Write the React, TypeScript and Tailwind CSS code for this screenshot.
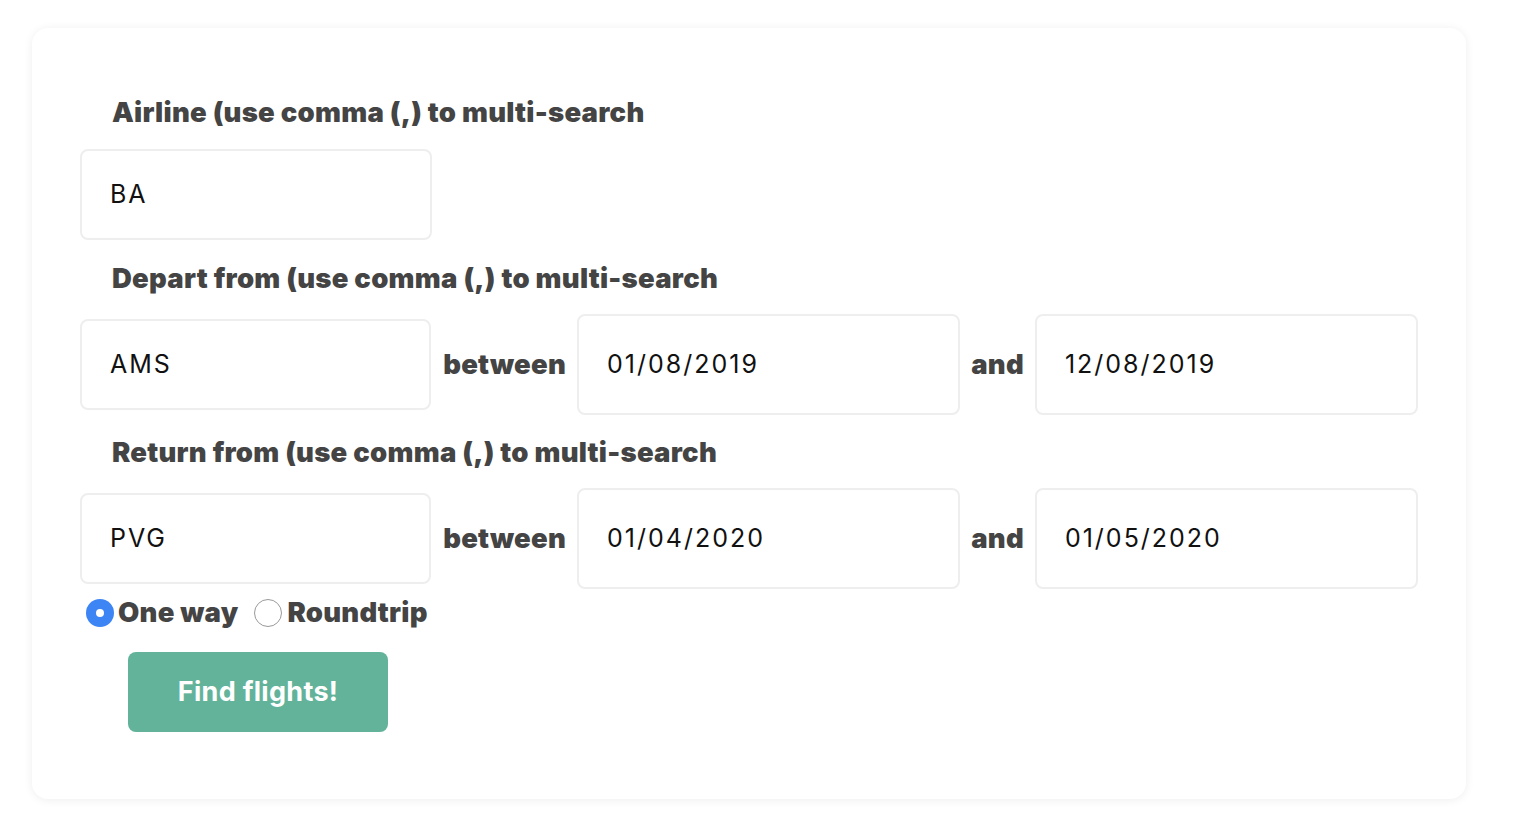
import React from "react";

const heavy = "font-['Inter','Noto_Sans',sans-serif] font-black text-[#444] text-[27.5px] tracking-[0.25px]";

function Label({ children }: { children: React.ReactNode }) {
  return <div className={`${heavy} pl-8 leading-[36px]`}>{children}</div>;
}

function Field({ value, w, h }: { value: string; w: string; h: string }) {
  return (
    <div
      className={`${w} ${h} flex items-center rounded-lg border-2 border-[#eeeeee] bg-white pl-[28px] font-['Inter',sans-serif] text-[25px] text-[#111] tracking-[2px]`}
    >
      {value}
    </div>
  );
}

function RangeRow({ code, from, to }: { code: string; from: string; to: string }) {
  return (
    <div className="flex items-center">
      <Field value={code} w="w-[352px]" h="h-[91px]" />
      <span className={`${heavy} ml-[12px] mr-[11px]`}>between</span>
      <Field value={from} w="w-[384px]" h="h-[101px]" />
      <span className={`${heavy} ml-[11px] mr-[11px]`}>and</span>
      <Field value={to} w="w-[384px]" h="h-[101px]" />
    </div>
  );
}

export default function App() {
  return (
    <div className="min-h-screen bg-white pt-[28px] pl-[32px]">
      <div className="w-[1434px] rounded-2xl bg-white px-12 pt-[66px] pb-[67px] shadow-[0_1px_10px_rgba(0,0,0,0.07)]">
        <Label>Airline (use comma (,) to multi-search</Label>
        <div className="mt-[19px] mb-[20px]">
          <Field value="BA" w="w-[352px]" h="h-[91px]" />
        </div>
        <Label>Depart from (use comma (,) to multi-search</Label>
        <div className="mt-[18px] mb-[19px]">
          <RangeRow code="AMS" from="01/08/2019" to="12/08/2019" />
        </div>
        <Label>Return from (use comma (,) to multi-search</Label>
        <div className="mt-[18px]">
          <RangeRow code="PVG" from="01/04/2020" to="01/05/2020" />
        </div>
        <div className="mt-[10px] flex h-[28px] items-center pl-[6px]">
          <span className="flex h-[28px] w-[28px] items-center justify-center rounded-full bg-[#3d85f4]">
            <span className="h-[8px] w-[8px] rounded-full bg-white" />
          </span>
          <span className={`${heavy} ml-[4px]`}>One way</span>
          <span className="ml-[16px] h-[28px] w-[28px] rounded-full border border-[#999] bg-white" />
          <span className={`${heavy} ml-[5px]`}>Roundtrip</span>
        </div>
        <button className="mt-[25px] ml-[48px] h-[80px] w-[260px] rounded-lg bg-[#62b39a] font-['Inter',sans-serif] text-[27px] font-bold text-white tracking-[0.3px]">
          Find flights!
        </button>
      </div>
    </div>
  );
}
